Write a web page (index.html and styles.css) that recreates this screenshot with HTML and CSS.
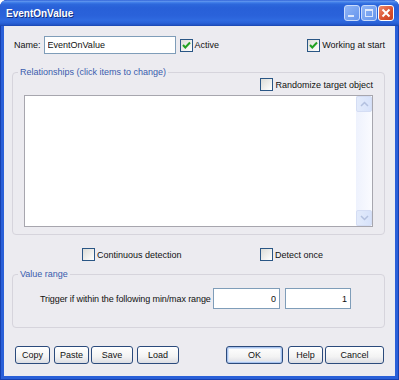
FILE: index.html
```html
<!DOCTYPE html>
<html lang="en">
<head>
    <meta charset="UTF-8">
    <title>EventOnValue</title>
    <link rel="stylesheet" href="styles.css">
</head>
<body>
    <div class="window">
        <div class="titlebar">
            <span class="title">EventOnValue</span>
            <div class="controls">
                <span class="cbtn disabled">
                    <svg width="14" height="14" viewBox="0 0 14 14"><rect x="3" y="9" width="6" height="2" fill="#fff"/></svg>
                </span>
                <span class="cbtn disabled">
                    <svg width="14" height="14" viewBox="0 0 14 14"><rect x="3.5" y="3.5" width="7" height="7" fill="none" stroke="#fff"/><rect x="3" y="3" width="8" height="2" fill="#fff"/></svg>
                </span>
                <span class="cbtn close">
                    <svg width="14" height="14" viewBox="0 0 14 14"><path d="M3.5 3.5 L10.5 10.5 M10.5 3.5 L3.5 10.5" stroke="#fff" stroke-width="2"/></svg>
                </span>
            </div>
        </div>

        <div class="client">
            <div class="name-row">
                <span class="lbl">Name:</span>
                <input class="field name" type="text" value="EventOnValue">
                <label class="check active">
                    <span class="box"><svg width="11" height="11" viewBox="0 0 11 11"><path d="M2 5 L4.3 7.5 L9 2.5" fill="none" stroke="#21a121" stroke-width="2"/></svg></span>Active
                </label>
                <label class="check push">
                    <span class="box"><svg width="11" height="11" viewBox="0 0 11 11"><path d="M2 5 L4.3 7.5 L9 2.5" fill="none" stroke="#21a121" stroke-width="2"/></svg></span>Working at start
                </label>
            </div>

            <fieldset class="group rel">
                <legend>Relationships (click items to change)</legend>
                <div class="rand-row">
                    <label class="check"><span class="box"></span>Randomize target object</label>
                </div>
                <div class="listbox">
                    <div class="vscroll">
                        <span class="sbtn"><svg width="9" height="6" viewBox="0 0 9 6"><path d="M1 5 L4.5 1.5 L8 5" fill="none" stroke="#b3c0df" stroke-width="1.5"/></svg></span>
                        <span class="sbtn"><svg width="9" height="6" viewBox="0 0 9 6"><path d="M1 1 L4.5 4.5 L8 1" fill="none" stroke="#b3c0df" stroke-width="1.5"/></svg></span>
                    </div>
                </div>
            </fieldset>

            <div class="detect-row">
                <label class="check first"><span class="box"></span>Continuous detection</label>
                <label class="check"><span class="box"></span>Detect once</label>
            </div>

            <fieldset class="group range">
                <legend>Value range</legend>
                <div class="trigger-row">
                    <span class="trig-text">Trigger if within the following min/max range</span>
                    <input class="field num" type="text" value="0">
                    <input class="field num second" type="text" value="1">
                </div>
            </fieldset>

            <div class="buttons">
                <button class="btn small">Copy</button>
                <button class="btn small gap4">Paste</button>
                <button class="btn mid gap2">Save</button>
                <button class="btn mid gap4">Load</button>
                <button class="btn ok">OK</button>
                <button class="btn small gap5">Help</button>
                <button class="btn cancel gap2">Cancel</button>
            </div>
        </div>
    </div>
</body>
</html>
```

FILE: styles.css
```css
body {
    margin: 0;
    background: #fff;
    font-family: "Liberation Sans", Arial, sans-serif;
    font-size: 9px;
    color: #111;
}

.window {
    width: 399px;
    height: 380px;
    box-sizing: border-box;
    padding: 0 4px 4px;
    display: flex;
    flex-direction: column;
    background: #2a5fd8;
    border-radius: 7px 7px 0 0;
    box-shadow: inset 0 0 0 1px #1640b0;
}

.titlebar {
    height: 26px;
    margin: 0 -4px;
    padding: 0 5px 0 6px;
    display: flex;
    align-items: center;
    border-radius: 7px 7px 0 0;
    background: linear-gradient(to bottom, #2d5fd6 0%, #5f95ee 5%, #4381ea 9%, #2d68dc 16%, #2860d8 30%, #2a62da 60%, #2f6ae0 78%, #2a62d8 88%, #2255c8 95%, #1a45ad 100%);
}

.title {
    color: #fff;
    font-weight: bold;
    font-size: 10px;
    text-shadow: 1px 1px #14307e;
}

.controls {
    margin-left: auto;
    display: flex;
    gap: 1px;
}

.cbtn {
    width: 16px;
    height: 16px;
    box-sizing: border-box;
    border: 1px solid #fff;
    border-radius: 3px;
    display: flex;
    align-items: center;
    justify-content: center;
}

.cbtn.disabled {
    background: linear-gradient(135deg, #8fb4f6, #6494ec);
    border-color: #c9dbfb;
}

.cbtn.disabled svg {
    opacity: 0.75;
}

.cbtn.close {
    background: linear-gradient(135deg, #ee8a6c, #d9502e 60%, #c8401f);
}

.client {
    flex: 1;
    background: #ecebf0;
    display: flex;
    flex-direction: column;
}

.name-row {
    display: flex;
    align-items: center;
    height: 18px;
    padding: 10px 10px 0 10px;
}

.lbl {
    margin-right: 3px;
}

.field {
    box-sizing: border-box;
    border: 1px solid #7f9db9;
    background: #fff;
    font-family: inherit;
    font-size: 9px;
    color: #111;
    padding: 0 3px;
    margin: 0;
    outline: none;
}

.field.name {
    width: 132px;
    height: 18px;
}

.check {
    display: inline-flex;
    align-items: center;
    gap: 2px;
    white-space: nowrap;
}

.check.active {
    margin-left: 4px;
}

.check.push {
    margin-left: auto;
}

.box {
    width: 13px;
    height: 13px;
    box-sizing: border-box;
    border: 1px solid #2a5685;
    background: linear-gradient(135deg, #dcdcd7, #fff);
    display: flex;
    align-items: center;
    justify-content: center;
}

.group {
    margin: 12px 0 0 8px;
    width: 373px;
    min-width: 0;
    box-sizing: border-box;
    padding: 0;
    border: 1px solid #d6d4dc;
    border-radius: 4px;
}

.group legend {
    margin-left: 5px;
    padding: 0 2px;
    line-height: 12px;
    color: #3a5cae;
}

.rand-row {
    display: flex;
    justify-content: flex-end;
    padding-right: 11px;
    height: 13px;
}

.listbox {
    margin: 4px 0 7px 11px;
    width: 349px;
    height: 132px;
    box-sizing: border-box;
    border: 1px solid #a7a6ae;
    background: #fff;
    display: flex;
    justify-content: flex-end;
}

.vscroll {
    width: 16px;
    display: flex;
    flex-direction: column;
    justify-content: space-between;
    background: linear-gradient(to right, #eef2fd, #fafbff);
}

.sbtn {
    height: 16px;
    box-sizing: border-box;
    border: 1px solid #d4ddf4;
    border-radius: 2px;
    background: linear-gradient(to right, #e3ebfb, #d7e2fa);
    display: flex;
    align-items: center;
    justify-content: center;
}

.detect-row {
    display: flex;
    height: 13px;
    margin-top: 13px;
    padding-left: 78px;
}

.check.first {
    width: 178px;
}

.group.range {
    margin-top: 7px;
}

.trigger-row {
    display: flex;
    align-items: center;
    margin: 8px 0 18px;
    padding-left: 27px;
}

.trig-text {
    width: 173px;
    white-space: nowrap;
    letter-spacing: -0.1px;
}

.field.num {
    width: 67px;
    height: 21px;
    text-align: right;
}

.field.num.second {
    width: 66px;
    margin-left: 5px;
}

.buttons {
    display: flex;
    margin-top: 18px;
    padding: 0 11px;
}

.btn {
    height: 18px;
    box-sizing: border-box;
    padding: 0;
    font-family: inherit;
    font-size: 9px;
    color: #111;
    border: 1px solid #2b4a7c;
    border-radius: 3px;
    background: linear-gradient(to bottom, #ffffff, #f3f3f3 60%, #dcdde3);
}

.btn.small {
    width: 35px;
}

.btn.mid {
    width: 42px;
}

.btn.ok {
    width: 57px;
    margin-left: auto;
    box-shadow: inset 0 0 0 1px #a9c3ee, inset 0 0 0 2px #d7e4f8;
}

.btn.cancel {
    width: 59px;
}

.gap2 {
    margin-left: 2px;
}

.gap4 {
    margin-left: 4px;
}

.gap5 {
    margin-left: 5px;
}
```
